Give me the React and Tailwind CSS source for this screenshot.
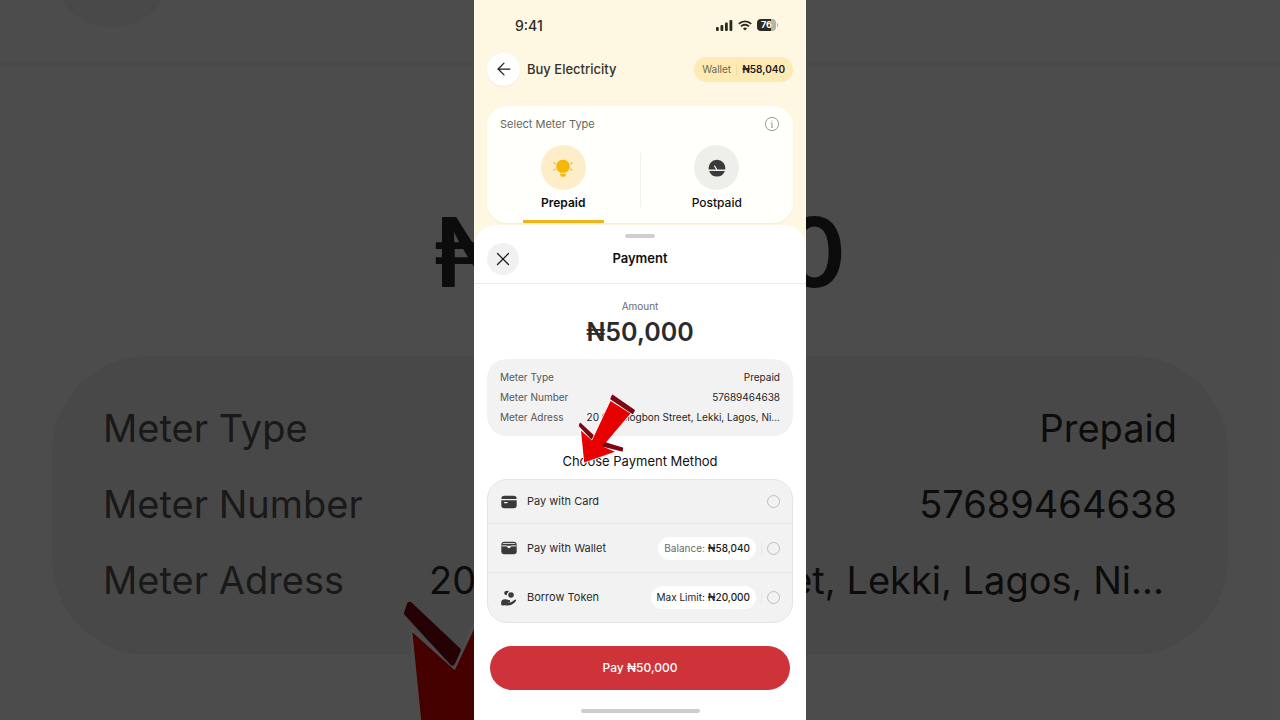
import React from "react";
import { ArrowLeft, X } from "lucide-react";

const meterDetails = [
  { label: "Meter Type", value: "Prepaid" },
  { label: "Meter Number", value: "57689464638" },
  { label: "Meter Adress", value: "20 Gbenlogbon Street, Lekki, Lagos, Ni..." },
];

const methods = [
  { id: "card", label: "Pay with Card", icon: <CardIcon />, row: "h-[43px]" },
  {
    id: "wallet",
    label: "Pay with Wallet",
    icon: <WalletIcon />,
    row: "h-[49px] border-t border-[#e4e4e4]",
    note: "Balance:",
    noteColor: "text-[#6b6b6b]",
    amount: "₦58,040",
  },
  {
    id: "borrow",
    label: "Borrow Token",
    icon: <BorrowIcon />,
    row: "h-[50px] border-t border-[#e4e4e4]",
    note: "Max Limit:",
    noteColor: "text-[#1c1c1c]",
    amount: "₦20,000",
  },
];

export default function App() {
  return (
    <div className="relative min-h-screen overflow-hidden bg-white font-['Inter','Liberation_Sans',sans-serif]">
      <Backdrop />
      <main className="relative mx-auto flex min-h-screen w-full max-w-[332px] flex-col bg-[#fef7e2]">
        <StatusBar />
        <Header />
        <MeterTypeCard />
        <PaymentSheet />
      </main>
    </div>
  );
}

// Enlarged, dimmed copy of the payment sheet behind the phone column
function Backdrop() {
  return (
    <div aria-hidden="true" className="absolute inset-0 overflow-hidden">
      <div className="flex h-[66px] items-end border-b-4 border-[#f6f6f6] px-[52px] pb-[34px]">
        <div className="h-[120px] w-[120px] shrink-0 rounded-full bg-[#f6f6f6]" />
      </div>
      <div className="flex h-[290px] items-center justify-center pt-[82px] text-[96px] font-semibold text-[#2b2b2b]">
        ₦50,000
      </div>
      <dl className="mx-[52px] flex h-[299px] flex-col justify-center rounded-[96px] bg-[#f2f2f2] px-[51px] pb-[4px] text-[38px] leading-[76px]">
        {meterDetails.map((d) => (
          <div key={d.label} className="flex justify-between">
            <dt className="text-[#555555]">{d.label}</dt>
            <dd className={d.label === "Meter Adress" ? "w-[748px] whitespace-nowrap text-[#2b2b2b]" : "text-[#2b2b2b]"}>
              {d.value}
            </dd>
          </div>
        ))}
      </dl>
      <PointerArrow className="absolute left-1/2 top-[487px] ml-[-243px] h-[278px] w-[231px]" />
      <div className="absolute inset-0 bg-black/70" />
    </div>
  );
}

function StatusBar() {
  return (
    <div className="flex h-[50px] items-center justify-between pl-[41px] pr-[28px] text-[#2b2b22]">
      <span className="text-[14px] font-medium">9:41</span>
      <div className="flex items-center gap-[5px]">
        <svg viewBox="0 0 17 11" className="h-[11px] w-[17px]" fill="currentColor">
          <rect x="0" y="7" width="2.800" height="4" rx="1" />
          <rect x="4.500" y="5" width="2.800" height="6" rx="1" />
          <rect x="9" y="2.500" width="2.800" height="8.500" rx="1" />
          <rect x="13.500" y="0" width="2.800" height="11" rx="1" />
        </svg>
        <svg viewBox="0 0 14 11" className="h-[11px] w-[14px]" fill="none" stroke="currentColor" strokeWidth="1.9">
          <path d="M.8 3.900a9 9 0 0 1 12.400 0" />
          <path d="M3 6.400a5.800 5.800 0 0 1 8 0" />
          <path d="M7 10.600 4.900 8.400a3.100 3.100 0 0 1 4.200 0z" fill="currentColor" stroke="none" />
        </svg>
        <div className="flex items-center">
          <span className="h-[12px] w-[19px] rounded-[4px] bg-linear-to-r from-[#2b2b22] from-75% to-[#b5b2a3] to-75% text-center text-[9px] leading-[12px] font-bold text-white">
            76
          </span>
          <span className="ml-px h-[4px] w-px rounded-r bg-[#b5b2a3]" />
        </div>
      </div>
    </div>
  );
}

function Header() {
  return (
    <header className="flex h-[38px] items-center px-[13px]">
      <button
        aria-label="Back"
        className="flex h-[33px] w-[33px] items-center justify-center rounded-full bg-white shadow-xs"
      >
        <ArrowLeft size={20} strokeWidth={1.5} className="text-[#1c1c1c]" />
      </button>
      <h1 className="ml-[7px] text-[13px] leading-[18px] font-medium text-[#33332c]">Buy Electricity</h1>
      <div className="ml-auto flex h-[25px] items-center rounded-full bg-[#fdeab5] px-[8px] text-[10px]">
        <span className="text-[#6f6850]">Wallet</span>
        <span className="mx-[5px] h-[13px] w-px bg-[#f3dfa6]" />
        <span className="font-semibold text-[#1c1c1c]">₦58,040</span>
      </div>
    </header>
  );
}

function MeterTypeCard() {
  return (
    <section className="mx-[13px] mt-[18px] h-[117px] rounded-[20px] bg-[#fffffb] shadow-xs">
      <div className="flex h-[36px] items-center justify-between px-[13px]">
        <h2 className="text-[11px] text-[#66665f]">Select Meter Type</h2>
        <svg viewBox="0 0 16 16" className="h-[16px] w-[16px]" fill="none" stroke="#9a9a94">
          <circle cx="8" cy="8" r="6.600" />
          <path d="M6.800 7H8v4.300M7.200 11.300h1.600" />
          <circle cx="8" cy="4.700" r=".5" fill="#9a9a94" stroke="none" />
        </svg>
      </div>
      <div className="flex h-[81px] pt-[3px]">
        <button className="flex flex-1 flex-col items-center text-[12px] font-semibold text-[#0f0f0f]">
          <span className="flex h-[45px] w-[45px] items-center justify-center rounded-full bg-[#feedc9]">
            <BulbIcon />
          </span>
          <span className="leading-[26px]">Prepaid</span>
          <span className="mt-auto h-[3px] w-[81px] bg-[#edb41c]" />
        </button>
        <span className="mt-[8px] h-[54px] w-px bg-[#f0f0ec]" />
        <button className="flex flex-1 flex-col items-center text-[12px] font-medium text-[#0f0f0f]">
          <span className="flex h-[45px] w-[45px] items-center justify-center rounded-full bg-[#eeeeeb]">
            <GaugeIcon />
          </span>
          <span className="leading-[26px]">Postpaid</span>
        </button>
      </div>
    </section>
  );
}

function PaymentSheet() {
  return (
    <section className="relative mt-[2px] flex flex-1 flex-col rounded-t-[22px] bg-white">
      <span className="mx-auto mt-[9px] h-[4px] w-[30px] rounded-full bg-[#cfcfcf]" />
      <div className="grid h-[46px] grid-cols-[32px_1fr_32px] items-center border-b border-[#ebebeb] px-[13px] pb-[4px]">
        <button
          aria-label="Close"
          className="flex h-[32px] w-[32px] items-center justify-center rounded-full bg-[#f1f1f1]"
        >
          <X size={22} strokeWidth={1.4} className="text-[#1c1c1c]" />
        </button>
        <h2 className="text-center text-[13px] font-semibold text-[#111111]">Payment</h2>
      </div>

      <div className="flex flex-col items-center pt-[14px]">
        <p className="text-[10px] leading-[16px] text-[#6b6b6b]">Amount</p>
        <p className="text-[25px] leading-[36px] font-semibold text-[#2b2b2b]">₦50,000</p>
      </div>

      <dl className="mx-[13px] mt-[9px] rounded-[20px] bg-[#f2f2f2] px-[13px] pt-[8px] pb-[9px] text-[10px] leading-[20px]">
        {meterDetails.map((d) => (
          <div key={d.label} className="flex justify-between">
            <dt className="text-[#555555]">{d.label}</dt>
            <dd className="whitespace-nowrap text-[#1f1f1f]">{d.value}</dd>
          </div>
        ))}
      </dl>

      <h3 className="mt-[15px] text-center text-[13px] leading-[20px] text-[#111111]">Choose Payment Method</h3>

      <div className="mx-[13px] mt-[8px] rounded-[20px] border border-[#e4e4e4] bg-[#f2f2f2]">
        {methods.map((m) => (
          <label key={m.id} htmlFor={m.id} className={`flex items-center pl-[13px] pr-[12px] ${m.row}`}>
            {m.icon}
            <span className="ml-[10px] text-[11px] text-[#2b2b2b]">{m.label}</span>
            <span className="ml-auto flex items-center">
              {m.amount && (
                <>
                  <span className="flex h-[23px] items-center gap-[3px] rounded-full bg-white px-[6px] text-[10px] text-[#1c1c1c]">
                    <span className={m.noteColor}>{m.note}</span>
                    <span className="font-medium">{m.amount}</span>
                  </span>
                  <span className="mx-[5px] h-[13px] w-px bg-[#e8e8e8]" />
                </>
              )}
              <input
                type="radio"
                name="method"
                id={m.id}
                className="h-[13px] w-[13px] appearance-none rounded-full border border-[#bdbdbd] checked:border-4 checked:border-[#ce3339]"
              />
            </span>
          </label>
        ))}
      </div>

      <button className="mx-[16px] mt-[23px] h-[44px] rounded-full bg-[#ce3339] text-[12px] font-medium text-white">
        Pay ₦50,000
      </button>
      <span className="mx-auto mt-[19px] mb-[7px] h-[4px] w-[119px] rounded-full bg-[#cccccc]" />

      <PointerArrow className="absolute left-[103px] top-[168px] h-[72px] w-[60px]" />
    </section>
  );
}

// Red tutorial arrow
function PointerArrow({ className }) {
  return (
    <svg viewBox="0 0 60 72" className={className} strokeLinejoin="round">
      <path
        d="M7.200 69.500 4 37.600l11 9.900L33.500 8l20 12.400-28 33.100 12.500 5.300z"
        fill="#e80000"
        stroke="#fff"
        strokeWidth="1.600"
        paintOrder="stroke"
      />
      <g fill="#7d0612" stroke="#7d0612" strokeWidth="1.400">
        <path d="m3.300 30.400 12.600 11.900-1.500 3.300L2.500 32.700z" />
        <path d="m35.500 2.400 21.700 15-1.600 3L34 5.800z" />
        <path d="m28.400 50 17.100 5.200-.4 2.700L26 53z" />
      </g>
    </svg>
  );
}

function BulbIcon() {
  return (
    <svg viewBox="0 0 20 20" className="h-[20px] w-[20px]" fill="#f5b70a">
      <path d="M10 1.700a6.700 6.700 0 0 0-4 12.100c.6.4 1 .6 1.200.9h5.600c.2-.3.6-.5 1.200-.9a6.700 6.700 0 0 0-4-12.100z" />
      <path d="M6.900 15.700h6.200c-.2 1.900-1.300 3.100-3.100 3.100s-2.900-1.200-3.100-3.100z" />
      <path
        d="m1 5 1.400.8M1 12l1.400-.8M19 5l-1.400.8M19 12l-1.400-.8"
        stroke="#f5b70a"
        strokeWidth="1.200"
        strokeLinecap="round"
      />
    </svg>
  );
}

function GaugeIcon() {
  return (
    <svg viewBox="0 0 18 18" className="h-[18px] w-[18px]" fill="#3a3a3a">
      <path d="M9 .7a8.300 8.300 0 0 0-8.200 9.800H8L5.900 6.900l1-.6 2.500 4.200h7.800A8.300 8.300 0 0 0 9 .7z" />
      <path d="M1.100 12a8.400 8.400 0 0 0 15.800 0z" />
    </svg>
  );
}

function CardIcon() {
  return (
    <svg viewBox="0 0 16 14" className="h-[14px] w-[16px]" fill="#3a3a3a">
      <path d="M3.500.8h9A3 3 0 0 1 15.600 4H.4A3 3 0 0 1 3.500.8z" />
      <path d="M.3 5.200h15.400v5a3 3 0 0 1-3.100 3H3.400a3 3 0 0 1-3.100-3zm2.800 1.900v1.200h3.400V7.100z" fillRule="evenodd" />
    </svg>
  );
}

function WalletIcon() {
  return (
    <svg viewBox="0 0 16 14" className="h-[14px] w-[16px]">
      <rect x=".3" y=".7" width="15.400" height="12.600" rx="3" fill="#3a3a3a" />
      <path d="M1.800 2.500h12.400" stroke="#f2f2f2" strokeWidth=".8" />
      <path d="M.6 4.900h4.900c.6 0 .8.4 1 .9.200.6.700.9 1.500.9s1.300-.3 1.500-.9c.2-.5.4-.9 1-.9h4.900" fill="none" stroke="#f2f2f2" />
      <path d="M5.600 4.800h4.800c-.5.200-.6.500-.8 1-.2.700-.7 1-1.600 1s-1.400-.3-1.600-1c-.2-.5-.3-.8-.8-1z" fill="#f2f2f2" />
    </svg>
  );
}

function BorrowIcon() {
  return (
    <svg viewBox="0 0 16 16" className="h-[16px] w-[16px]" fill="#3a3a3a">
      <path d="M5.900.8A3 3 0 0 1 8 1.600 4.300 4.300 0 0 0 5.700 5.200 2.600 2.600 0 0 1 3.200 3.400 2.600 2.600 0 0 1 5.900.8z" />
      <circle cx="10" cy="5" r="2.800" />
      <path d="M1 10.300c1.200-1.300 3-1.500 4.600-.7.700.3 1.400.4 2.200.4 1.200 0 1.600.8 1.300 1.400-.3.500-1 .6-2.500.5 1.600.6 3.300.4 4.700-.5l2.400-1.600c.9-.6 1.900.4 1.200 1.300-1.600 2-3.700 3.800-6.100 4.200-2.200.4-4-.2-5.600-.1-.9 0-1.400.3-2 .3-.8 0-1-.5-1-1.200v-2.600c0-.6.3-1 .8-1.400z" />
    </svg>
  );
}
